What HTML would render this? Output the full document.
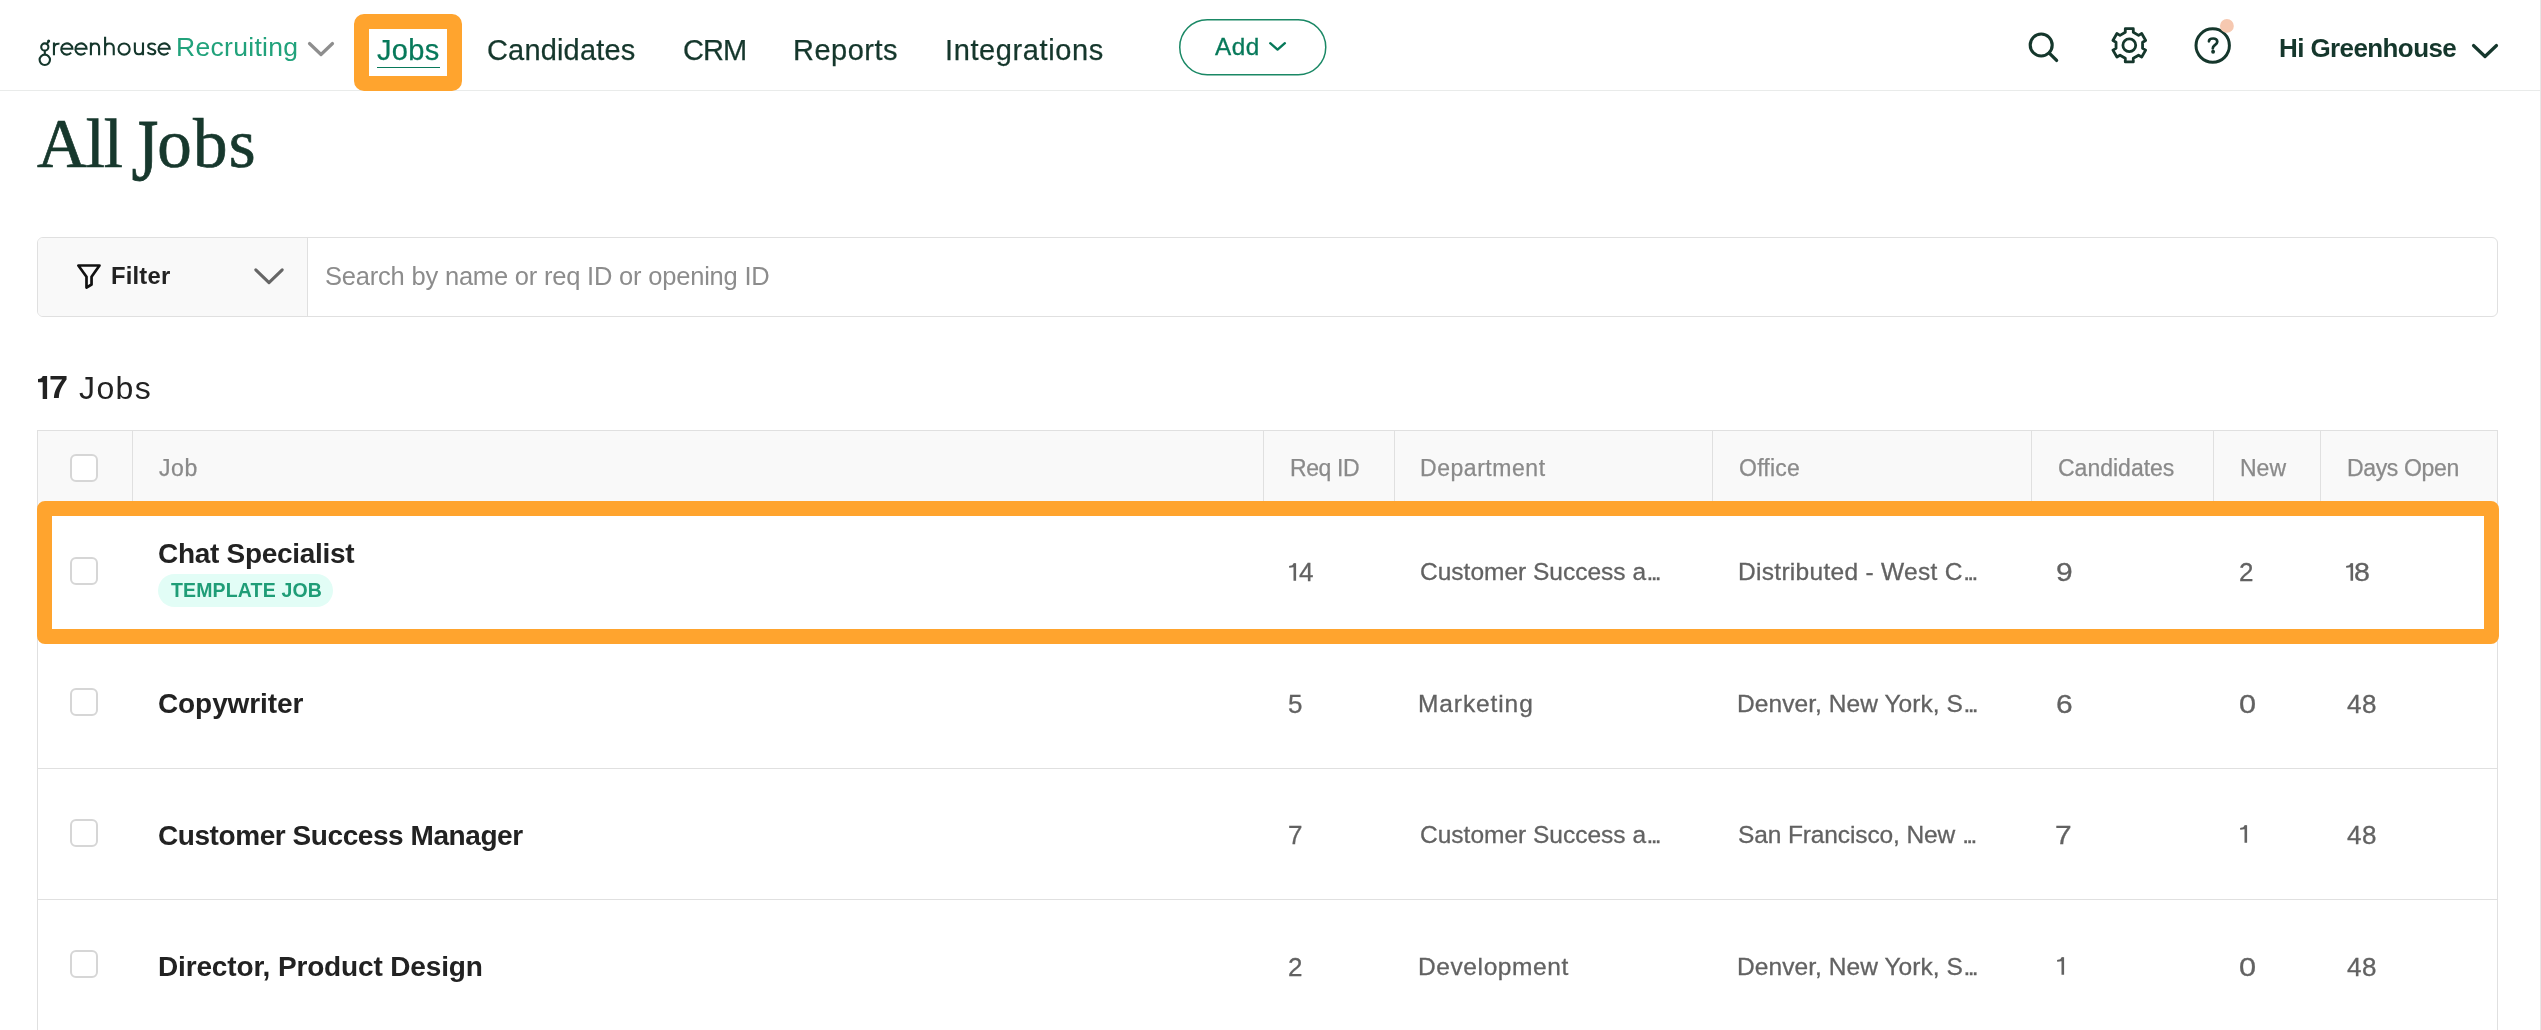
<!DOCTYPE html>
<html><head><meta charset="utf-8">
<style>
html,body{margin:0;padding:0;background:#fff;}
body{width:2541px;height:1030px;position:relative;overflow:hidden;font-family:"Liberation Sans",sans-serif;}
.a{position:absolute;white-space:nowrap;line-height:1;will-change:transform;}
.nav{color:#15372c;font-size:29px;top:35.5px;-webkit-text-stroke:0.25px currentColor;}
.hd{color:#8a8a8a;font-size:23px;top:456.6px;-webkit-text-stroke:0.25px #8a8a8a;}
.ttl{color:#222;font-weight:bold;font-size:28px;letter-spacing:-0.3px;}
.dt{color:#626262;font-size:24.5px;-webkit-text-stroke:0.3px #626262;}
.num{color:#626262;font-size:26px;letter-spacing:0.6px;-webkit-text-stroke:0.3px #626262;}
.el{letter-spacing:-2.7px;margin-left:0.5px;}
.cb{position:absolute;left:70px;width:24px;height:24px;border:2px solid #d6d6d6;border-radius:6px;background:#fff;}
.vl{position:absolute;top:431px;height:75px;width:1px;background:#e0e0e0;}
.hl{position:absolute;left:37px;width:2461px;height:1px;background:#e0e0e0;}
</style></head><body>

<!-- header line (under orange box) -->
<div style="position:absolute;left:0;top:89.5px;width:2541px;height:1.5px;background:#e9ebea;"></div>
<div style="position:absolute;left:2540px;top:0;width:1px;height:1030px;background:#e6e6e6;"></div>

<!-- logo -->
<svg style="position:absolute;left:0;top:0" width="180" height="80" viewBox="0 0 180 80">
<g fill="none" stroke="#15372c" stroke-width="2.1">
<circle cx="44.8" cy="46.95" r="3.6"/>
<path d="M44.8 50.5 V54.7"/>
<circle cx="44.8" cy="59.85" r="5.2"/>
<path d="M47 44 L48.6 41.2" stroke-linecap="round"/>
<path d="M53.95 42.6 V55.3 M53.95 47.6 C54.3 44.8 56.2 43.3 59.5 43.8"/>
<path d="M61.3 48.8 H72.45 A5.6 5.6 0 1 0 71.14 52.65"/>
<path d="M75.45 48.8 H86.6 A5.6 5.6 0 1 0 85.29 52.65"/>
<path d="M90.9 42.6 V55.3 M90.9 48 C90.9 45 92.8 43.45 95 43.45 C97.6 43.45 99.1 45.2 99.1 48 V55.3"/>
<path d="M105.1 36.7 V55.3 M105.1 48 C105.1 45 107 43.45 109.3 43.45 C111.9 43.45 113.75 45.2 113.75 48 V55.3"/>
<circle cx="124.1" cy="49.05" r="5.6"/>
<path d="M134.85 42.6 V50 C134.85 53 136.5 54.25 138.9 54.25 C141.3 54.25 143 52.8 143 50 M143 42.6 V55.3"/>
<path d="M155.6 45 C154.8 43.9 153.4 43.45 151.8 43.45 C149.6 43.45 148.2 44.5 148.2 46.1 C148.2 50.3 155.3 48.1 155.3 51.9 C155.3 53.4 153.8 54.25 151.7 54.25 C149.8 54.25 148.3 53.6 147.5 52.3"/>
<path d="M158.55 48.8 H169.7 A5.6 5.6 0 1 0 168.39 52.65"/>
</g>
<circle cx="48.7" cy="41" r="1.5" fill="#15372c"/>
</svg>
<div class="a" style="left:176px;top:34.3px;font-size:26.5px;color:#21a27b;letter-spacing:0.3px;">Recruiting</div>
<svg class="a" style="left:305px;top:40px" width="32" height="20" viewBox="0 0 32 20"><path d="M4.5 3.5 L16 14.5 L27.5 3.5" fill="none" stroke="#8e8e8e" stroke-width="3.2" stroke-linecap="round" stroke-linejoin="round"/></svg>

<div style="position:absolute;left:354px;top:14px;width:78px;height:47px;border:15px solid #ffa42e;border-radius:10px;"></div>
<div class="a nav" style="left:377px;color:#07795a;letter-spacing:0.3px;">Jobs</div>
<div style="position:absolute;left:377px;top:66.5px;width:63px;height:1.5px;background:#07795a;"></div>

<div class="a nav" style="left:487px;letter-spacing:0.17px;">Candidates</div>
<div class="a nav" style="left:683px;letter-spacing:-1px;">CRM</div>
<div class="a nav" style="left:793px;letter-spacing:0.5px;">Reports</div>
<div class="a nav" style="left:945px;letter-spacing:0.6px;">Integrations</div>

<svg style="position:absolute;left:1170px;top:10px" width="170" height="75" viewBox="0 0 170 75"><rect x="9.75" y="9.75" width="146" height="55" rx="27.5" fill="none" stroke="#1a8865" stroke-width="1.5"/></svg>
<div class="a" style="left:1215px;top:35.3px;font-size:24.3px;color:#07795a;letter-spacing:0.5px;-webkit-text-stroke:0.3px #07795a;">Add</div>
<svg class="a" style="left:1266px;top:39px" width="24" height="16" viewBox="0 0 24 16"><path d="M4.2 4.2 L11.55 10.6 L18.9 4.2" fill="none" stroke="#07795a" stroke-width="2.4" stroke-linecap="round" stroke-linejoin="round"/></svg>

<!-- search -->
<svg class="a" style="left:2020px;top:24px" width="50" height="50" viewBox="0 0 50 50"><circle cx="21.2" cy="21" r="11" fill="none" stroke="#15372c" stroke-width="3.1"/><path d="M29.3 29.1 L36.6 36.4" stroke="#15372c" stroke-width="3.3" stroke-linecap="round"/></svg>
<!-- gear -->
<svg class="a" style="left:2104px;top:20px" width="50" height="50" viewBox="0 0 50 50">
<g transform="translate(25.3,25.3)" fill="none" stroke="#15372c" stroke-width="2.8" stroke-linejoin="round">
<path d="M-4 -16.6 L4 -16.6 L4 -13 L9.26 -9.96 L12.38 -11.76 L16.38 -4.84 L13.26 -3.04 L13.26 3.04 L16.38 4.84 L12.38 11.76 L9.26 9.96 L4 13 L4 16.6 L-4 16.6 L-4 13 L-9.26 9.96 L-12.38 11.76 L-16.38 4.84 L-13.26 3.04 L-13.26 -3.04 L-16.38 -4.84 L-12.38 -11.76 L-9.26 -9.96 L-4 -13 Z"/>
<circle cx="0" cy="0" r="6.4"/>
</g></svg>
<!-- help -->
<svg class="a" style="left:2187px;top:10px" width="56" height="60" viewBox="0 0 56 60">
<circle cx="25.7" cy="35.55" r="16.7" fill="none" stroke="#15372c" stroke-width="3"/>
<path d="M21.95 31.3 C22 29.5 24 28.5 26.3 28.5 C28.5 28.5 30.3 29.8 30.3 31.7 C30.3 33.7 28.6 34.6 27.3 35.6 C26.2 36.5 25.8 37.3 25.8 38.4" fill="none" stroke="#15372c" stroke-width="2.7" stroke-linecap="round"/>
<circle cx="26.1" cy="41.8" r="1.95" fill="#15372c"/>
<circle cx="39.9" cy="15.9" r="6.9" fill="#f6c8b0"/>
</svg>
<div class="a" style="left:2279px;top:35px;font-size:26px;font-weight:bold;color:#15372c;letter-spacing:-0.6px;">Hi Greenhouse</div>
<svg class="a" style="left:2468px;top:40px" width="34" height="22" viewBox="0 0 34 22"><path d="M5.5 5.5 L17 16.5 L28.5 5.5" fill="none" stroke="#15372c" stroke-width="3.2" stroke-linecap="round" stroke-linejoin="round"/></svg>

<!-- title -->
<div class="a" style="left:37px;top:109.7px;font-family:'Liberation Serif',serif;font-size:69px;color:#17382d;letter-spacing:-1.1px;word-spacing:-6.5px;-webkit-text-stroke:0.7px #17382d;">All <span style="display:inline-block;transform:scaleY(1.3);transform-origin:50% 13px;">J</span><span style="letter-spacing:1.2px">obs</span></div>

<!-- filter -->
<div style="position:absolute;left:37px;top:237px;width:2459px;height:77.5px;border:1.5px solid #e0e0e0;border-radius:6px;background:#fff;overflow:hidden;">
  <div style="position:absolute;left:0;top:0;width:269px;height:100%;background:#f9f9f9;border-right:1.5px solid #e0e0e0;"></div>
</div>
<svg class="a" style="left:72px;top:259px" width="34" height="34" viewBox="0 0 34 34"><path d="M6.35 6.5 L27.5 6.5 L19.55 17.75 L19.55 25.5 L14.5 28.6 L14.5 17.75 Z" fill="none" stroke="#111" stroke-width="2.7" stroke-linejoin="round"/></svg>
<div class="a" style="left:111px;top:264.2px;font-size:23.8px;font-weight:bold;color:#222;letter-spacing:0.2px;">Filter</div>
<svg class="a" style="left:250px;top:262px" width="38" height="28" viewBox="0 0 38 28"><path d="M5.8 7.8 L19 20.6 L32.2 7.8" fill="none" stroke="#666" stroke-width="3.1" stroke-linecap="round" stroke-linejoin="round"/></svg>
<div class="a" style="left:325px;top:263.8px;font-size:25.5px;color:#8c8c8c;letter-spacing:-0.2px;">Search by name or req ID or opening ID</div>

<!-- count -->
<svg class="a" style="left:37.7px;top:375.7px" width="10" height="24" viewBox="0 0 10 24"><path d="M4.7 0 H9.1 V23.1 H4.7 V6.2 H0 V3 C2.6 3 4.2 2 4.7 0 Z" fill="#222"/></svg><div class="a" style="left:49px;top:371.3px;font-size:32px;color:#222;font-weight:bold;transform:scaleX(1.07);transform-origin:left;">7</div>
<div class="a" style="left:79px;top:371.8px;font-size:32px;color:#222;letter-spacing:1.4px;">Jobs</div>

<!-- table -->
<div style="position:absolute;left:37px;top:430px;width:2459px;height:700px;border:1px solid #e0e0e0;"></div>
<div style="position:absolute;left:38px;top:431px;width:2459px;height:75px;background:#f9f9f9;"></div>
<div class="vl" style="left:132px"></div>
<div class="vl" style="left:1263px"></div>
<div class="vl" style="left:1394px"></div>
<div class="vl" style="left:1712px"></div>
<div class="vl" style="left:2031px"></div>
<div class="vl" style="left:2213px"></div>
<div class="vl" style="left:2320px"></div>
<div class="hl" style="top:506px"></div>
<div class="hl" style="top:637px"></div>
<div class="hl" style="top:768px"></div>
<div class="hl" style="top:899px"></div>

<div class="cb" style="top:454px"></div>
<div class="a hd" style="left:159px;letter-spacing:0.6px">Job</div>
<div class="a hd" style="left:1289.5px;letter-spacing:-0.4px">Req ID</div>
<div class="a hd" style="left:1419.5px;letter-spacing:0.54px">Department</div>
<div class="a hd" style="left:1739px;letter-spacing:0.24px">Office</div>
<div class="a hd" style="left:2058px">Candidates</div>
<div class="a hd" style="left:2239.5px">New</div>
<div class="a hd" style="left:2346.5px;letter-spacing:-0.36px">Days Open</div>

<!-- row 1 -->
<div class="cb" style="top:557px"></div>
<div class="a ttl" style="left:158px;top:539.8px">Chat Specialist</div>
<div style="position:absolute;left:158px;top:574px;width:175px;height:33px;border-radius:17px;background:#e2fdf6;"></div>
<div class="a" style="left:170.5px;top:580.5px;font-size:19.5px;font-weight:bold;color:#1f9d77;letter-spacing:0.15px;">TEMPLATE JOB</div>
<svg class="a" style="left:1288.8px;top:563.1px" width="9" height="19" viewBox="0 0 9 19"><path d="M4.5 0.2 H7.1 V17.7 H4.5 Z M4.5 0.3 L6.2 0 L6.2 2.5 C5.2 4 3.5 4.7 0.6 4.7 C0.2 4.7 0 4.4 0 3.7 C0 3.1 0.3 2.8 0.8 2.8 C2.8 2.8 4 2 4.5 0.3 Z" fill="#626262"/></svg><div class="a num" style="left:1298.7px;top:559px">4</div>
<div class="a dt" style="left:1419.5px;top:560.3px;letter-spacing:0px">Customer Success a<span class="el">...</span></div>
<div class="a dt" style="left:1737.5px;top:560.3px;letter-spacing:0.3px">Distributed - West C<span class="el">...</span></div>
<div class="a num" style="left:2056px;top:559px;transform:scaleX(1.15);transform-origin:left">9</div>
<div class="a num" style="left:2239px;top:559px">2</div>
<svg class="a" style="left:2345.5px;top:563.2px" width="9" height="19" viewBox="0 0 9 19"><path d="M4.5 0.2 H7.1 V17.7 H4.5 Z M4.5 0.3 L6.2 0 L6.2 2.5 C5.2 4 3.5 4.7 0.6 4.7 C0.2 4.7 0 4.4 0 3.7 C0 3.1 0.3 2.8 0.8 2.8 C2.8 2.8 4 2 4.5 0.3 Z" fill="#626262"/></svg><div class="a num" style="left:2354.2px;top:559px;transform:scaleX(1.1);transform-origin:left">8</div>

<!-- row 2 -->
<div class="cb" style="top:688px"></div>
<div class="a ttl" style="left:158px;top:690.3px;letter-spacing:-0.1px">Copywriter</div>
<div class="a num" style="left:1288px;top:690.6px">5</div>
<div class="a dt" style="left:1418px;top:691.8px;letter-spacing:0.9px">Marketing</div>
<div class="a dt" style="left:1737px;top:691.8px;letter-spacing:0.07px">Denver, New York, S<span class="el">...</span></div>
<div class="a num" style="left:2056px;top:690.6px;transform:scaleX(1.15);transform-origin:left">6</div>
<div class="a num" style="left:2239px;top:690.6px;transform:scaleX(1.18);transform-origin:left">0</div>
<div class="a num" style="left:2346.5px;top:690.6px">48</div>

<!-- row 3 -->
<div class="cb" style="top:819px"></div>
<div class="a ttl" style="left:158px;top:821.8px;letter-spacing:-0.43px">Customer Success Manager</div>
<div class="a num" style="left:1288px;top:822px">7</div>
<div class="a dt" style="left:1419.5px;top:823.2px;letter-spacing:0px">Customer Success a<span class="el">...</span></div>
<div class="a dt" style="left:1737.5px;top:823.2px;letter-spacing:-0.12px">San Francisco, New&nbsp;<span class="el">...</span></div>
<div class="a num" style="left:2055px;top:822px;transform:scaleX(1.15);transform-origin:left">7</div>
<svg class="a" style="left:2239.5px;top:825.3px" width="9" height="19" viewBox="0 0 9 19"><path d="M4.5 0.2 H7.1 V17.7 H4.5 Z M4.5 0.3 L6.2 0 L6.2 2.5 C5.2 4 3.5 4.7 0.6 4.7 C0.2 4.7 0 4.4 0 3.7 C0 3.1 0.3 2.8 0.8 2.8 C2.8 2.8 4 2 4.5 0.3 Z" fill="#626262"/></svg>
<div class="a num" style="left:2346.5px;top:822px">48</div>

<!-- row 4 -->
<div class="cb" style="top:950px"></div>
<div class="a ttl" style="left:157.5px;top:953px;letter-spacing:-0.15px">Director, Product Design</div>
<div class="a num" style="left:1288px;top:953.5px">2</div>
<div class="a dt" style="left:1418px;top:954.7px;letter-spacing:0.6px">Development</div>
<div class="a dt" style="left:1737px;top:954.7px;letter-spacing:0.07px">Denver, New York, S<span class="el">...</span></div>
<svg class="a" style="left:2056.6px;top:957.1px" width="9" height="19" viewBox="0 0 9 19"><path d="M4.5 0.2 H7.1 V17.7 H4.5 Z M4.5 0.3 L6.2 0 L6.2 2.5 C5.2 4 3.5 4.7 0.6 4.7 C0.2 4.7 0 4.4 0 3.7 C0 3.1 0.3 2.8 0.8 2.8 C2.8 2.8 4 2 4.5 0.3 Z" fill="#626262"/></svg>
<div class="a num" style="left:2239px;top:953.5px;transform:scaleX(1.18);transform-origin:left">0</div>
<div class="a num" style="left:2346.5px;top:953.5px">48</div>

<!-- highlight -->
<div style="position:absolute;left:37px;top:501px;width:2432px;height:113px;border:15px solid #ffa42e;border-radius:8px;"></div>

</body></html>
